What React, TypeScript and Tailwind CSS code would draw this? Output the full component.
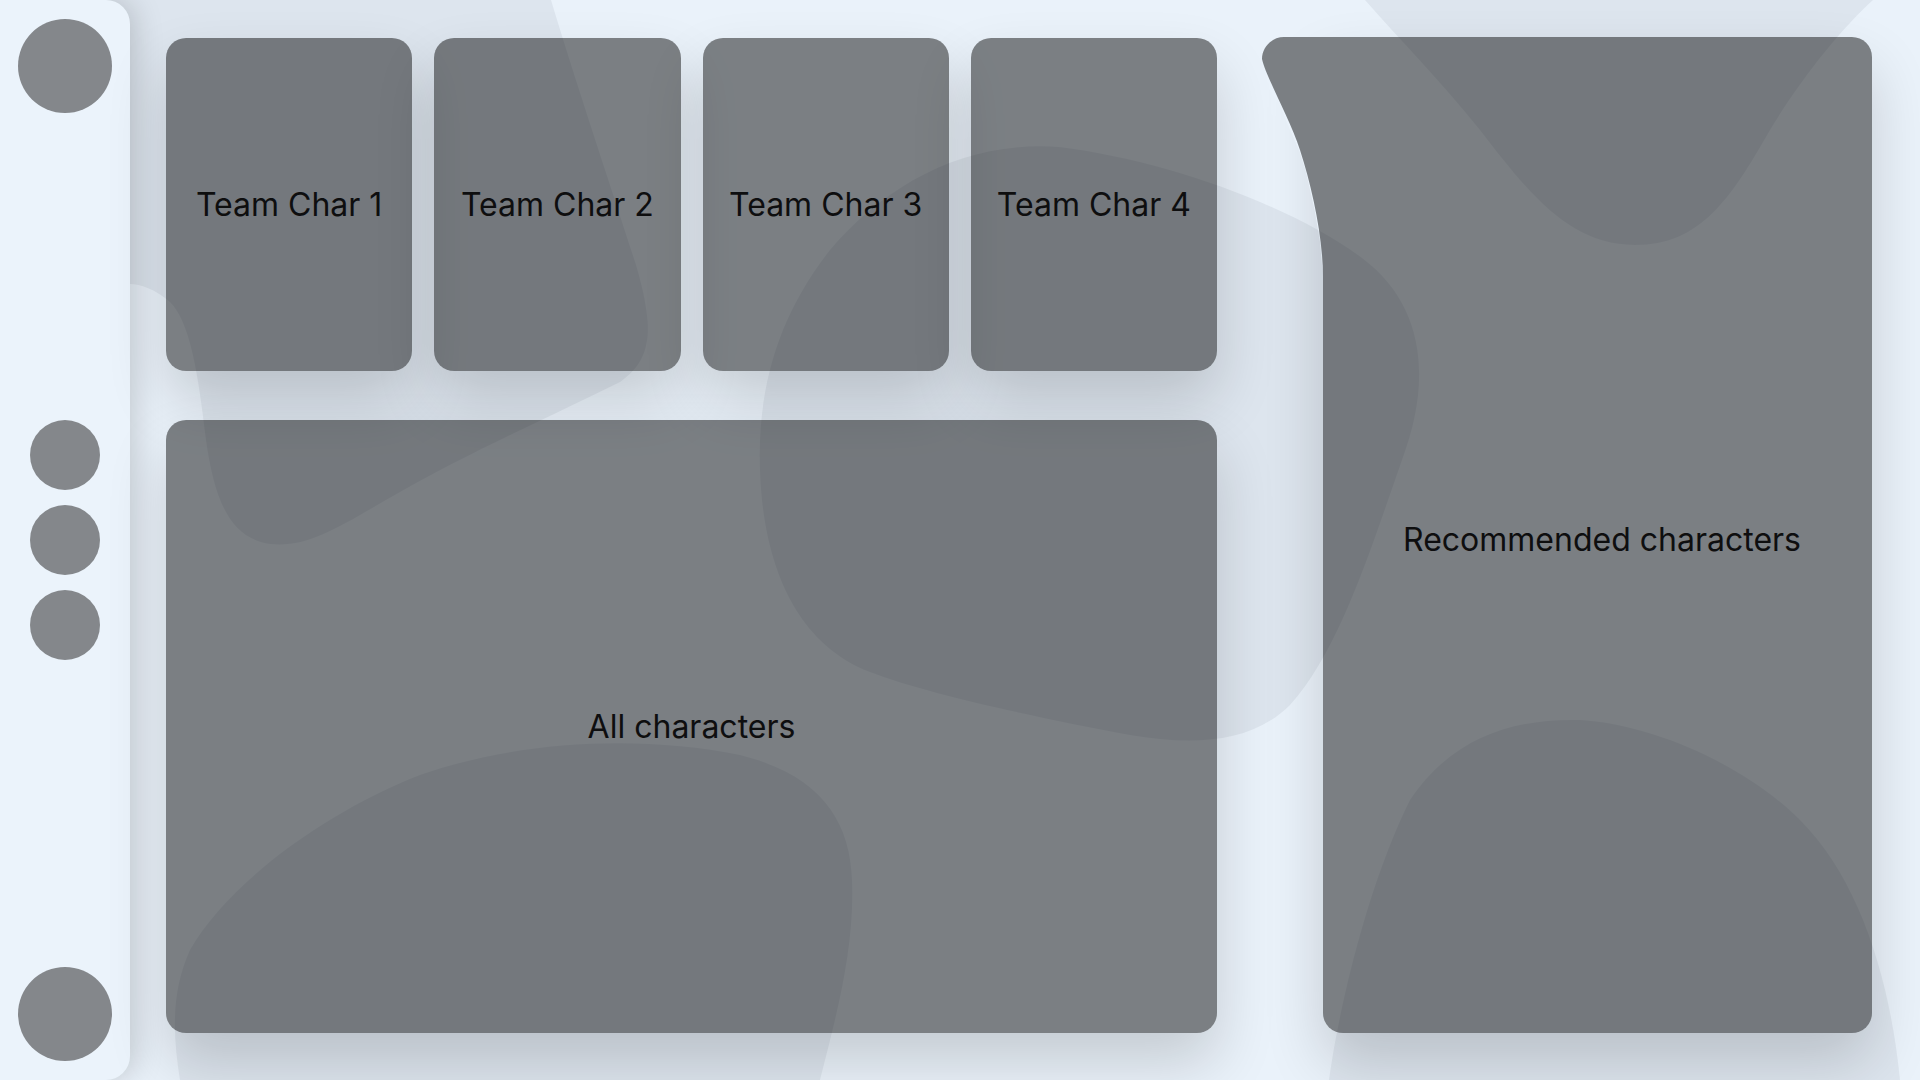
import type { ReactNode } from 'react';

const teamSlots = ['Team Char 1', 'Team Char 2', 'Team Char 3', 'Team Char 4'];

function BackgroundBlobs() {
  return (
    <svg className="absolute inset-0 h-full w-full" viewBox="0 0 1920 1080" preserveAspectRatio="none" aria-hidden="true">
      <g fill="#dde5ee">
        <path d="M0 0 L551 0 C575 80 612 190 636 265 C655 330 652 360 620 382 C560 412 470 452 400 492 C340 526 310 548 270 544 C228 538 214 496 206 440 C198 372 190 322 170 302 C155 289 140 284 130 284 L0 284 Z" />
        <path d="M1059 147 C1165 160 1290 205 1362 258 C1425 305 1432 380 1402 460 C1372 545 1340 650 1290 705 C1250 745 1190 745 1130 735 C1040 718 930 695 870 672 C800 645 770 575 762 500 C752 400 775 320 830 250 C885 185 965 140 1059 147 Z" />
        <path d="M180 1080 C172 1030 172 990 190 950 C230 880 330 810 420 775 C520 740 640 735 740 755 C820 775 850 820 852 880 C855 950 835 1020 820 1080 Z" />
        <path d="M1365 0 C1400 40 1440 80 1480 130 C1530 195 1570 245 1635 245 C1700 245 1730 200 1770 130 C1800 80 1840 30 1873 0 Z" />
        <path d="M1329 1080 C1340 1000 1370 880 1410 800 C1450 740 1510 718 1580 720 C1660 725 1750 770 1800 820 C1860 880 1890 980 1900 1080 Z" />
      </g>
    </svg>
  );
}

function Sidebar() {
  return (
    <aside className="flex h-full w-[130px] shrink-0 flex-col items-center justify-between rounded-r-[24px] bg-[#ebf3fb] py-[19px] shadow-[4px_0_30px_rgba(0,0,0,0.18)]">
      <div className="h-[94px] w-[94px] rounded-full bg-[#84878b]" />
      <div className="flex flex-col gap-[15px]">
        <div className="h-[70px] w-[70px] rounded-full bg-[#84878b]" />
        <div className="h-[70px] w-[70px] rounded-full bg-[#84878b]" />
        <div className="h-[70px] w-[70px] rounded-full bg-[#84878b]" />
      </div>
      <div className="h-[94px] w-[94px] rounded-full bg-[#84878b]" />
    </aside>
  );
}

function Panel({ className, children }: { className?: string; children: ReactNode }) {
  return (
    <div
      className={`flex items-center justify-center rounded-[20px] bg-black/[0.475] text-[32px] leading-none shadow-[0_30px_60px_rgba(0,0,0,0.16)] ${className ?? ''}`}
    >
      {children}
    </div>
  );
}

export default function App() {
  return (
    <div className="relative h-screen w-full overflow-hidden bg-[#eaf2fa] font-['Inter','Noto_Sans',sans-serif] text-[#0e0e0f]">
      <BackgroundBlobs />
      <div className="relative flex h-full">
        <Sidebar />
        <main className="flex flex-1 gap-[106px] pb-[47px] pl-[36px] pr-[48px] pt-[37px]">
          <section className="flex w-[1051px] shrink-0 flex-col gap-[49px]">
            <div className="grid h-[334px] grid-cols-4 gap-[22px] pt-px">
              {teamSlots.map((slot) => (
                <Panel key={slot}>{slot}</Panel>
              ))}
            </div>
            <Panel className="flex-1">All characters</Panel>
          </section>

          <section className="relative flex flex-1 items-center justify-center rounded-[20px] rounded-tl-none bg-black/[0.475] pl-[9px] pt-[10px] text-[32px] leading-none">
            {/* shadow layer, cut out where the flared edge sits so it doesn't show through */}
            <div className="pointer-events-none absolute inset-0 rounded-[20px] rounded-tl-none shadow-[0_30px_60px_rgba(0,0,0,0.16)] [clip-path:polygon(evenodd,-300px_-300px,850px_-300px,850px_1300px,-300px_1300px,-300px_-300px,0px_0px,-39px_0px,-52px_3px,-59px_10px,-62px_22px,-61px_32px,-56px_45px,-50px_58px,-45px_63px,-35px_88px,-24px_113px,-17px_135px,-8px_175px,-3px_205px,0px_240px,0px_0px,-300px_-300px)]" />
            {/* flared top-left edge of the panel */}
            <svg className="absolute left-[-61px] top-0 h-[240px] w-[61px]" viewBox="0 0 61 240" aria-hidden="true">
              <path
                d="M22 0 L61 0 L61 240 C61 200 50 150 38 113 C28 82 4 40 0 22 C0 10 10 0 22 0 Z"
                fill="rgba(0,0,0,0.475)"
              />
            </svg>
            <span className="relative">Recommended characters</span>
          </section>
        </main>
      </div>
    </div>
  );
}
